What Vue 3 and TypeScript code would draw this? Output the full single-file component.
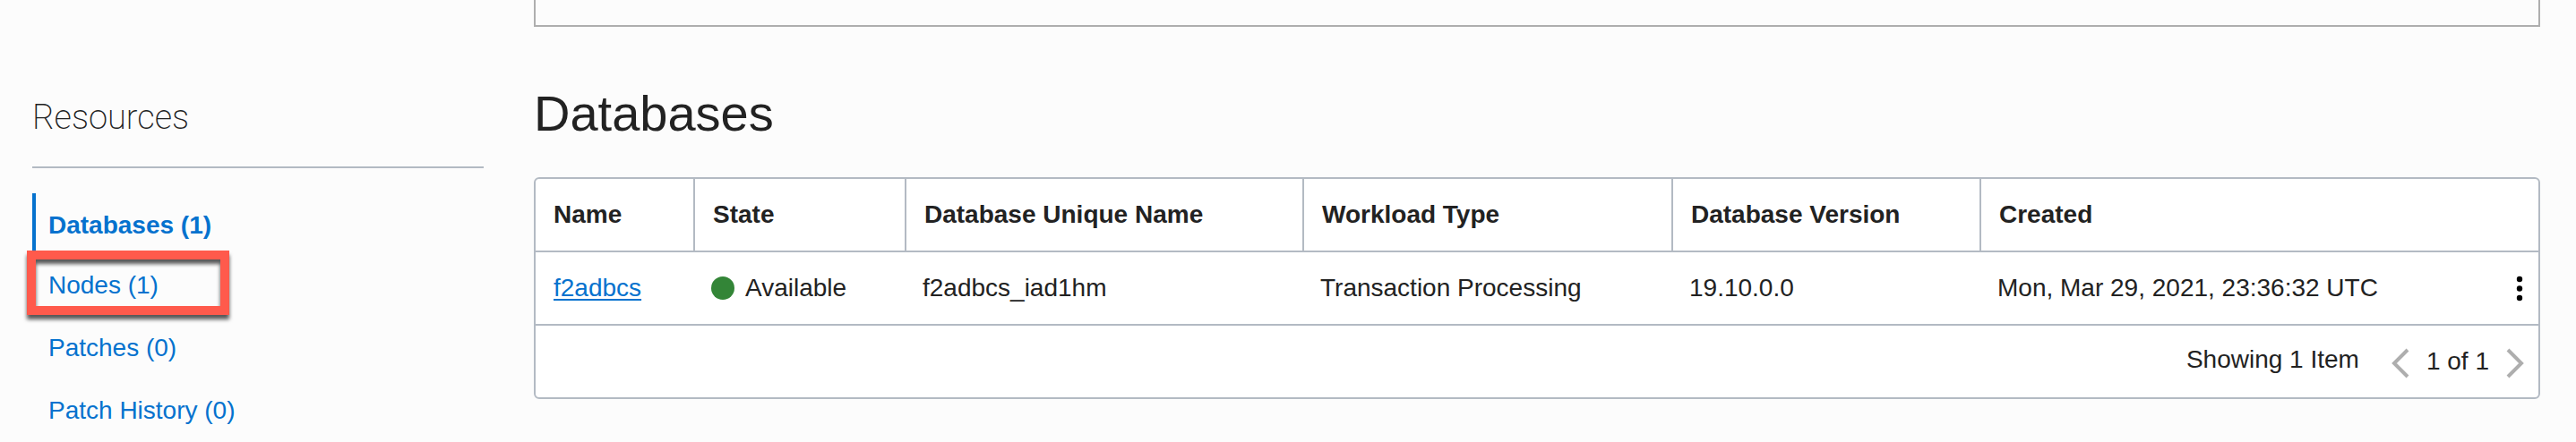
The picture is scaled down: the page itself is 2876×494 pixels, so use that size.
<script setup lang="ts">
interface Resource {
  label: string
  count: number
  active?: boolean
  highlighted?: boolean
}

interface Database {
  name: string
  state: string
  uniqueName: string
  workload: string
  version: string
  created: string
}

const resources: Resource[] = [
  { label: 'Databases', count: 1, active: true },
  { label: 'Nodes', count: 1, highlighted: true },
  { label: 'Patches', count: 0 },
  { label: 'Patch History', count: 0 },
]

const databases: Database[] = [
  {
    name: 'f2adbcs',
    state: 'Available',
    uniqueName: 'f2adbcs_iad1hm',
    workload: 'Transaction Processing',
    version: '19.10.0.0',
    created: 'Mon, Mar 29, 2021, 23:36:32 UTC',
  },
]
</script>

<template>
  <div class="page">
    <aside class="sidebar">
      <h2 class="sidebar-title">Resources</h2>
      <nav aria-label="Resources">
        <ul class="resource-list">
          <li
            v-for="item in resources"
            :key="item.label"
            class="resource"
            :class="{ active: item.active, highlighted: item.highlighted }"
          >
            <a href="#">{{ item.label }} ({{ item.count }})</a>
          </li>
        </ul>
      </nav>
    </aside>

    <main class="content">
      <div class="details-panel"></div>
      <h1 class="title">Databases</h1>
      <section class="card">
        <table class="grid">
          <colgroup>
            <col class="col-name" />
            <col class="col-state" />
            <col class="col-unique" />
            <col class="col-workload" />
            <col class="col-version" />
            <col />
            <col class="col-actions" />
          </colgroup>
          <thead>
            <tr>
              <th scope="col">Name</th>
              <th scope="col">State</th>
              <th scope="col">Database Unique Name</th>
              <th scope="col">Workload Type</th>
              <th scope="col">Database Version</th>
              <th scope="col" colspan="2">Created</th>
            </tr>
          </thead>
          <tbody>
            <tr v-for="db in databases" :key="db.name">
              <td><a class="db-link" href="#">{{ db.name }}</a></td>
              <td>
                <span class="state"><span class="dot"></span>{{ db.state }}</span>
              </td>
              <td>{{ db.uniqueName }}</td>
              <td>{{ db.workload }}</td>
              <td>{{ db.version }}</td>
              <td>{{ db.created }}</td>
              <td class="actions">
                <button type="button" class="icon-button" aria-label="Actions">
                  <svg width="8" height="32" viewBox="0 0 8 32">
                    <circle cx="4" cy="6" r="3.2" />
                    <circle cx="4" cy="16.5" r="3.2" />
                    <circle cx="4" cy="27" r="3.2" />
                  </svg>
                </button>
              </td>
            </tr>
          </tbody>
        </table>
        <footer class="footer">
          <span class="summary">Showing 1 Item</span>
          <div class="pager">
            <button type="button" class="icon-button" aria-label="Previous page">
              <svg class="chevron" width="20" height="40" viewBox="0 0 20 40">
                <path d="M18 7 L3 22 L18 37" />
              </svg>
            </button>
            <span>1 of 1</span>
            <button type="button" class="icon-button" aria-label="Next page">
              <svg class="chevron" width="20" height="40" viewBox="0 0 20 40">
                <path d="M2 7 L17 22 L2 37" />
              </svg>
            </button>
          </div>
        </footer>
      </section>
    </main>
  </div>
</template>

<style>
html,
body {
  background: #fcfcfc;
}
</style>

<style scoped>
.page {
  display: grid;
  grid-template-columns: 504px minmax(0, 1fr);
  column-gap: 56px;
  padding: 0 40px 0 36px;
  color: #222;
  font-family: "Liberation Sans", Arial, sans-serif;
  font-size: 28px;
  line-height: 36px;
}

.sidebar-title {
  margin: 107px 0 0;
  padding-bottom: 31px;
  border-bottom: 2px solid #b3bac3;
  font-family: Roboto, "Liberation Sans", sans-serif;
  font-size: 38px;
  font-weight: 200;
  line-height: 48px;
}

.resource-list {
  margin: 28px 0 0;
  padding: 0;
  list-style: none;
}

.resource {
  position: relative;
  padding: 17px 0 17px 14px;
  border-left: 4px solid transparent;
}

.resource:last-child {
  padding-bottom: 0;
}

.resource a {
  color: #0572ce;
  text-decoration: none;
}

.resource.active {
  padding-top: 18px;
  padding-bottom: 14px;
  border-left-color: #0572ce;
  font-weight: 700;
}

.resource.highlighted::after {
  content: "";
  position: absolute;
  top: -4px;
  left: -10px;
  box-sizing: border-box;
  width: 226px;
  height: 72px;
  border: 10px solid #ff5a4c;
  filter: drop-shadow(0 5px 2px rgba(0, 0, 0, 0.65));
  pointer-events: none;
}

.details-panel {
  box-sizing: border-box;
  height: 30px;
  border: 2px solid #aeaeae;
  border-top: 0;
}

.title {
  margin: 64px 0 38px;
  font-size: 56px;
  font-weight: 400;
  line-height: 66px;
}

.card {
  border: 2px solid #b3bac3;
  border-radius: 6px;
  background: #fff;
}

.grid {
  width: 100%;
  table-layout: fixed;
  border-spacing: 0;
}

.col-name {
  width: 176px;
}

.col-state {
  width: 236px;
}

.col-unique {
  width: 444px;
}

.col-workload {
  width: 412px;
}

.col-version {
  width: 344px;
}

.col-actions {
  width: 44px;
}

th,
td {
  box-sizing: border-box;
  height: 82px;
  padding: 0 0 0 20px;
  border-bottom: 2px solid #b3bac3;
  text-align: left;
  white-space: nowrap;
}

th {
  font-weight: 700;
}

th + th {
  border-left: 2px solid #b3bac3;
}

.db-link {
  color: #0572ce;
  text-decoration: underline;
  text-decoration-thickness: 2px;
  text-underline-offset: 3px;
}

.state {
  display: flex;
  align-items: center;
  gap: 12px;
}

.dot {
  width: 26px;
  height: 26px;
  border-radius: 50%;
  background: #338537;
}

td.actions {
  padding: 0 17px 0 0;
}

.icon-button {
  display: block;
  margin: 0;
  padding: 0;
  border: 0;
  background: none;
  cursor: pointer;
}

.actions .icon-button {
  margin-left: auto;
}

.icon-button svg {
  display: block;
}

.chevron {
  fill: none;
  stroke: #aeaeae;
  stroke-width: 4;
}

.footer {
  display: flex;
  align-items: flex-start;
  justify-content: flex-end;
  gap: 36px;
  padding: 20px 16px 20px 20px;
}

.pager {
  display: flex;
  align-items: center;
  gap: 19px;
  line-height: 40px;
}
</style>
